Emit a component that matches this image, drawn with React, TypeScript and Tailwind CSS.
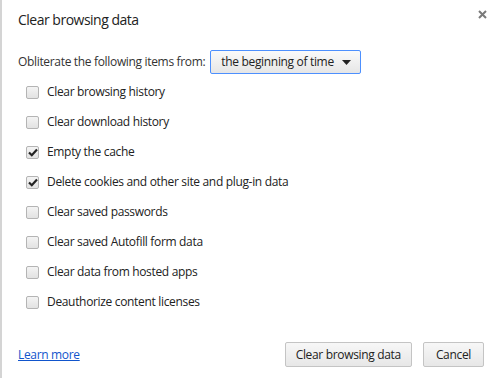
import { useState } from 'react';

const items = [
  { label: 'Clear browsing history', checked: false },
  { label: 'Clear download history', checked: false },
  { label: 'Empty the cache', checked: true },
  { label: 'Delete cookies and other site and plug-in data', checked: true },
  { label: 'Clear saved passwords', checked: false },
  { label: 'Clear saved Autofill form data', checked: false },
  { label: 'Clear data from hosted apps', checked: false },
  { label: 'Deauthorize content licenses', checked: false },
];

function CheckBox({ checked, onClick }: { checked: boolean; onClick: () => void }) {
  return (
    <button
      onClick={onClick}
      className="w-[13px] h-[13px] rounded-[2px] border border-[#b4b4b4] bg-gradient-to-b from-[#f4f4f4] to-[#e2e2e2] flex items-center justify-center shrink-0"
    >
      {checked && (
        <svg width="10" height="9" viewBox="0 0 10 9">
          <path d="M1 4.5 L3.8 7.2 L9 1.5" fill="none" stroke="#222" strokeWidth="2.2" />
        </svg>
      )}
    </button>
  );
}

export default function App() {
  const [checks, setChecks] = useState(items.map((i) => i.checked));

  return (
    <div
      className="w-[501px] h-[378px] bg-white border-l-2 border-[#d4d4d4] relative flex flex-col text-[#333] text-[12px] tracking-[-0.33px]"
      style={{ fontFamily: '"Open Sans", "Liberation Sans", sans-serif' }}
    >
      {/* Close */}
      <button className="absolute right-[14px] top-[10px] text-[#777]">
        <svg width="9" height="9" viewBox="0 0 9 9">
          <path d="M1 1 L8 8 M8 1 L1 8" stroke="#7a7a7a" strokeWidth="2" />
        </svg>
      </button>

      {/* Header */}
      <h1 className="pl-[16px] pt-[9px] text-[14px] tracking-[-0.5px] text-[#222] leading-[22px]">
        Clear browsing data
      </h1>

      {/* Period */}
      <div className="flex items-center pl-[16px] mt-[19px] gap-[5px]">
        <span>Obliterate the following items from:</span>
        <div className="w-[151px] h-[24px] border border-[#4d90fe] rounded-[2px] bg-gradient-to-b from-[#fafafa] to-[#e6e6e6] flex items-center justify-between pl-[10px] pr-[9px] text-[#222]">
          <span>the beginning of time</span>
          <svg width="9" height="5" viewBox="0 0 9 5">
            <path d="M0 0 H9 L4.5 5 Z" fill="#222" />
          </svg>
        </div>
      </div>

      {/* Checkbox list */}
      <div className="flex flex-col pl-[24px] mt-[3px]">
        {items.map((item, i) => (
          <label key={item.label} className="h-[30px] flex items-center gap-[8px] cursor-pointer">
            <CheckBox
              checked={checks[i]}
              onClick={() => setChecks((c) => c.map((v, j) => (j === i ? !v : v)))}
            />
            <span className="text-[#222]">{item.label}</span>
          </label>
        ))}
      </div>

      {/* Footer */}
      <div className="mt-auto mb-[11px] flex items-center pl-[16px] pr-[17px]">
        <a href="#" className="text-[#15c] underline">
          Learn more
        </a>
        <div className="ml-auto flex gap-[11px]">
          <button className="h-[25px] px-[10px] border border-[#c4c4c4] rounded-[2px] bg-gradient-to-b from-[#f7f7f7] to-[#e7e7e7] text-[#222]">
            Clear browsing data
          </button>
          <button className="h-[25px] px-[12px] border border-[#c4c4c4] rounded-[2px] bg-gradient-to-b from-[#f7f7f7] to-[#e7e7e7] text-[#222]">
            Cancel
          </button>
        </div>
      </div>
    </div>
  );
}
